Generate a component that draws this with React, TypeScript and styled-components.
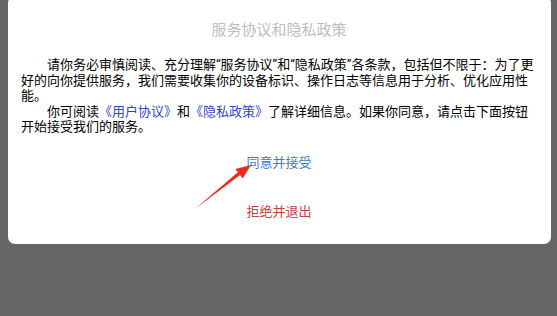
import React from "react";
import styled, { createGlobalStyle } from "styled-components";

const GlobalStyle = createGlobalStyle`
  html, body {
    margin: 0;
    padding: 0;
    background: #666666;
    height: 316px;
    overflow: hidden;
  }
  #root {
    height: 316px;
  }
`;

const Page = styled.div`
  position: relative;
  width: 557px;
  height: 316px;
  font-family: Roboto, "Noto Sans CJK SC", sans-serif;
`;

const Dialog = styled.div`
  margin: -4px 6px 0 8px;
  padding: 24px 14px 22px 13px;
  background: #ffffff;
  border-radius: 7px;
  display: flex;
  flex-direction: column;
`;

const Title = styled.div`
  font-size: 15px;
  line-height: 20px;
  color: #bdbdbd;
  text-align: center;
`;

const Body = styled.div`
  margin-top: 17px;
  font-size: 13px;
  line-height: 15.5px;
  color: #000000;
  text-spacing-trim: space-all;
  line-break: strict;
`;

const Para = styled.p`
  margin: 0;
  text-indent: 2em;
`;

const Link = styled.span`
  color: #2f43d4;
`;

const Actions = styled.div`
  display: flex;
  flex-direction: column;
  align-items: center;
  gap: 29px;
  margin-top: 18px;
`;

const ActionButton = styled.button<{ $tone: "accept" | "reject" }>`
  border: none;
  background: none;
  padding: 0;
  font-family: inherit;
  font-size: 13px;
  line-height: 20px;
  color: ${(p) => (p.$tone === "accept" ? "#3b7cc9" : "#c43f3f")};
  cursor: pointer;
`;

const Annotation = styled.svg`
  position: absolute;
  left: 0;
  top: 0;
  pointer-events: none;
`;

export default function App() {
  return (
    <>
      <GlobalStyle />
      <Page>
        <Dialog>
          <Title>服务协议和隐私政策</Title>
          <Body>
            <Para>
              请你务必审慎阅读、充分理解“服务协议”和“隐私政策”各条款，包括但不限于：为了更好的向你提供服务，我们需要收集你的设备标识、操作日志等信息用于分析、优化应用性能。
            </Para>
            <Para>
              你可阅读<Link>《用户协议》</Link>和<Link>《隐私政策》</Link>了解详细信息。如果你同意，请点击下面按钮开始接受我们的服务。
            </Para>
          </Body>
          <Actions>
            <ActionButton $tone="accept">同意并接受</ActionButton>
            <ActionButton $tone="reject">拒绝并退出</ActionButton>
          </Actions>
        </Dialog>
        <Annotation width="557" height="316" viewBox="0 0 557 316">
          <polygon
            points="195,213 237.9,176.2 235.3,172.9 251,169 242.7,182.4 240.1,179"
            fill="#f0291e"
          />
        </Annotation>
      </Page>
    </>
  );
}
